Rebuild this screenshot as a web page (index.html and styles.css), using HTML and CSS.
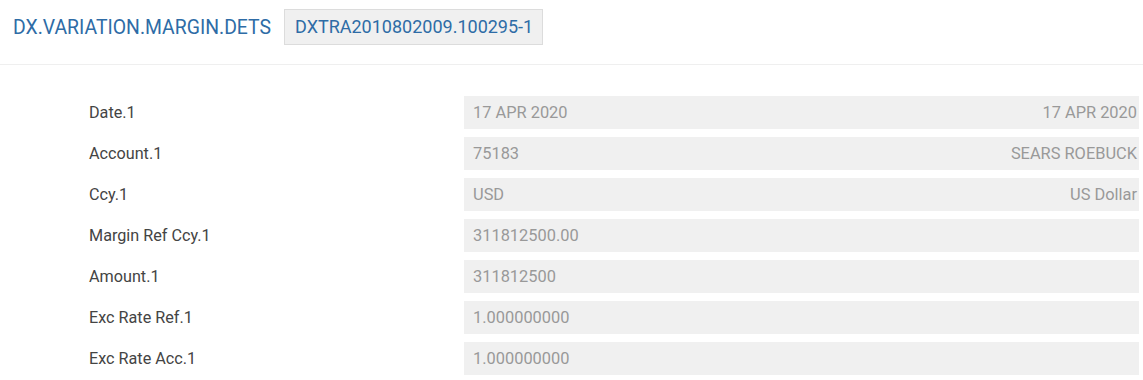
FILE: index.html
```html
<!DOCTYPE html>
<html>
<head>
<meta charset="utf-8">
<link rel="stylesheet" href="styles.css">
</head>
<body>
<div class="header">
  <span class="title">DX.VARIATION.MARGIN.DETS</span>
  <span class="badge">DXTRA2010802009.100295-1</span>
</div>
<div class="form">
  <div class="row"><div class="label">Date.1</div><div class="value"><span>17 APR 2020</span><span>17 APR 2020</span></div></div>
  <div class="row"><div class="label">Account.1</div><div class="value"><span>75183</span><span>SEARS ROEBUCK</span></div></div>
  <div class="row"><div class="label">Ccy.1</div><div class="value"><span>USD</span><span>US Dollar</span></div></div>
  <div class="row"><div class="label">Margin Ref Ccy.1</div><div class="value"><span>311812500.00</span></div></div>
  <div class="row"><div class="label">Amount.1</div><div class="value"><span>311812500</span></div></div>
  <div class="row"><div class="label">Exc Rate Ref.1</div><div class="value"><span>1.000000000</span></div></div>
  <div class="row"><div class="label">Exc Rate Acc.1</div><div class="value"><span>1.000000000</span></div></div>
</div>
</body>
</html>
```
FILE: styles.css
```css
html, body {
  margin: 0;
  padding: 0;
  background: #fff;
  font-family: Roboto, "Liberation Sans", sans-serif;
}
.header {
  display: flex;
  align-items: center;
  height: 65px;
  padding: 7px 0 17px 13px;
  border-bottom: 1px solid #efefef;
  box-sizing: border-box;
}
.title {
  font-size: 19.4px;
  color: #2e6ca6;
  margin-right: 13px;
}
.badge {
  display: inline-block;
  font-size: 18px;
  color: #2e6ca6;
  background: #f0f0f0;
  border: 1px solid #dcdcdc;
  height: 36px;
  line-height: 34px;
  padding: 0 9px 0 10px;
  box-sizing: border-box;
}
.form {
  padding: 31px 4px 0 89px;
  display: flex;
  flex-direction: column;
  gap: 8px;
}
.row {
  display: grid;
  grid-template-columns: 375px 1fr;
  height: 33px;
  align-items: center;
  font-size: 16.2px;
}
.label {
  color: #444;
}
.value {
  height: 33px;
  background: #f0f0f0;
  color: #999;
  font-size: 16.4px;
  display: flex;
  justify-content: space-between;
  align-items: center;
  padding: 0 2px 0 9px;
}
```
